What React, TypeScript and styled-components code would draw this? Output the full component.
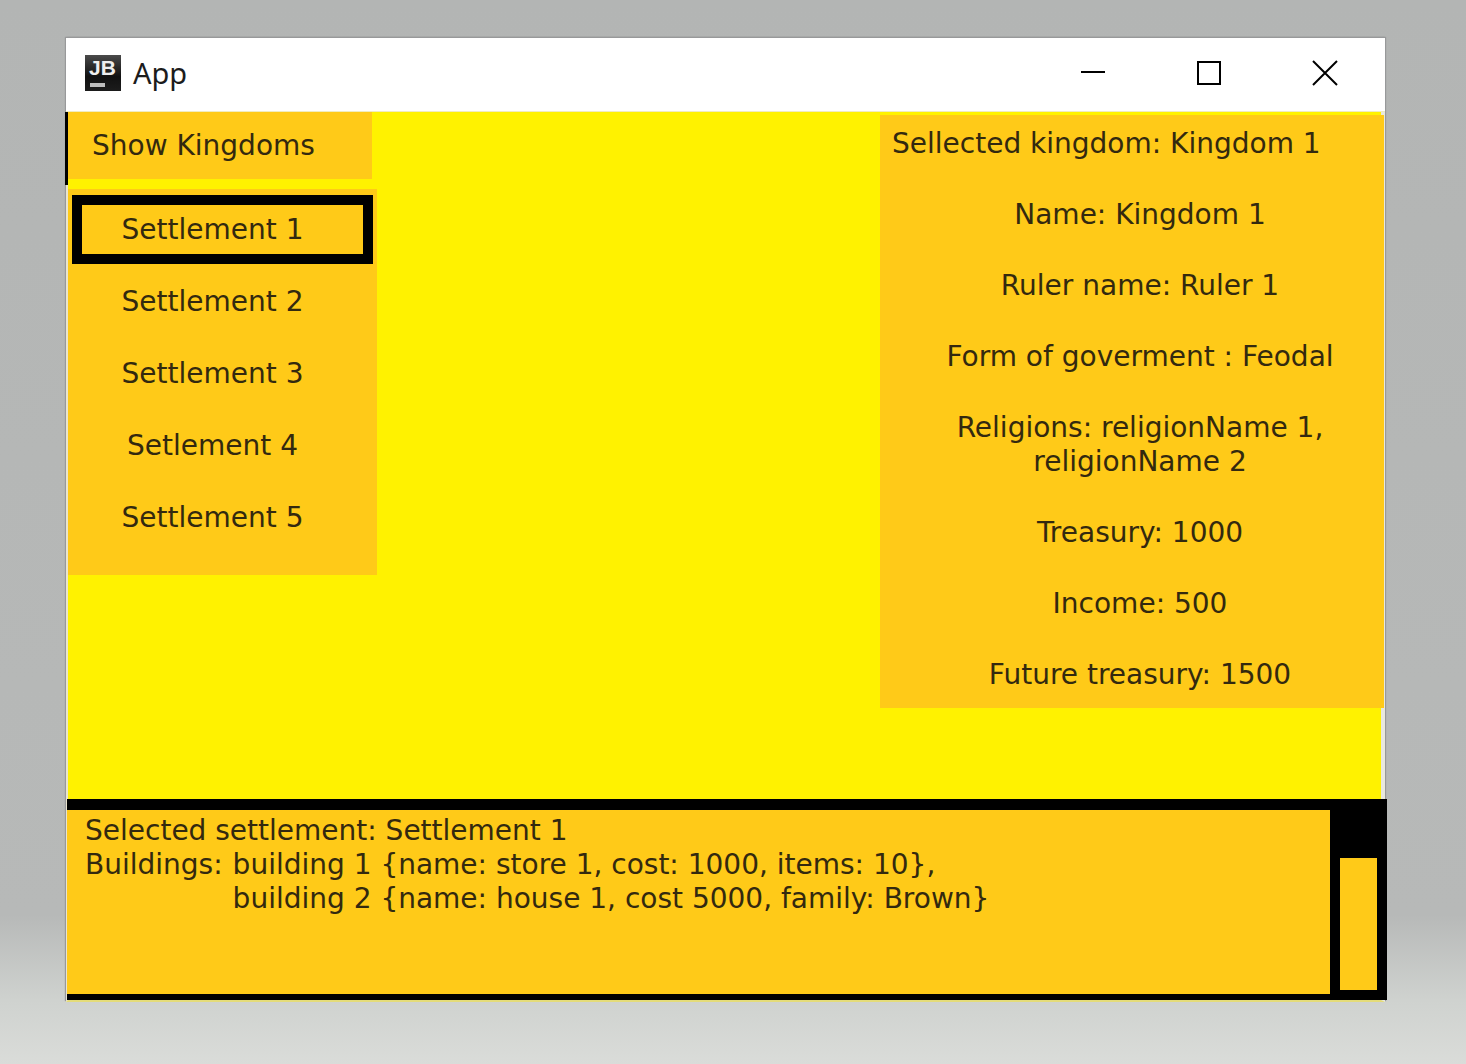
import React, { useState } from "react";
import styled, { createGlobalStyle } from "styled-components";

const colors = {
  ink: "#33290f",
  amber: "#ffca18",
  yellow: "#fff200",
  black: "#000000",
};

const GlobalStyle = createGlobalStyle`
  * {
    box-sizing: border-box;
  }
  body {
    margin: 0;
    color: ${colors.ink};
    font-family: Verdana, "DejaVu Sans", sans-serif;
    font-size: 28px;
    line-height: 34px;
  }
`;

const Desktop = styled.div`
  display: flex;
  min-height: 100vh;
  padding: 38px 81px 62px 66px;
  background: linear-gradient(
    to bottom,
    #b3b5b4 0%,
    #b7b9b8 86%,
    #cfd2cf 94%,
    #dadcd9 100%
  );
`;

const Window = styled.section`
  flex: 1;
  min-width: 0;
  display: flex;
  flex-direction: column;
  background: ${colors.yellow};
  border-left: 2px solid #e9e4cf;
  border-right: 4px solid #e9e9dd;
  border-bottom: 2px solid #e4dc7a;
  box-shadow: 0 -1px 1px 0 #98999a, -1px -1px 1px 0 #98999a,
    1px -1px 1px 0 #98999a;
`;

const TitleBar = styled.header`
  display: flex;
  align-items: center;
  height: 74px;
  margin: 0 -4px 0 -2px;
  padding: 0 2px 3px 19px;
  background: #ffffff;
  border-bottom: 1px solid #f0ecc0;
`;

const AppBadge = styled.svg`
  width: 36px;
  height: 36px;
  margin-right: 12px;
`;

const Title = styled.h1`
  flex: 1;
  margin: 0;
  color: #1c1c1c;
  font: 400 29px/34px "Segoe UI", "Noto Sans", sans-serif;
`;

const CaptionButton = styled.button`
  display: grid;
  place-items: center;
  width: 116px;
  height: 70px;
  padding: 0;
  border: 0;
  background: transparent;
  color: #000000;
`;

const CaptionIcon = styled.svg`
  width: 26px;
  height: 26px;
  fill: none;
  stroke: currentColor;
  stroke-width: 2;
`;

const Workspace = styled.main`
  flex: 1;
  display: flex;
  justify-content: space-between;
  align-items: flex-start;
`;

const Sidebar = styled.nav`
  display: flex;
  flex-direction: column;
  gap: 4px;
`;

const ToolSlot = styled.div`
  margin-left: -3px;
  padding-bottom: 6px;
  border-left: 3px solid ${colors.black};
  background: ${colors.yellow};
`;

const ShowButton = styled.button`
  display: block;
  width: 304px;
  height: 67px;
  padding: 0 24px;
  border: 0;
  background: ${colors.amber};
  color: inherit;
  font: inherit;
  text-align: left;
`;

const SettlementList = styled.ul`
  display: flex;
  flex-direction: column;
  gap: 3px;
  width: 309px;
  margin: 0;
  padding: 6px 4px 23px;
  background: ${colors.amber};
  list-style: none;
`;

const SettlementButton = styled.button<{ $selected: boolean }>`
  display: block;
  width: 100%;
  height: 69px;
  padding: 0 20px 0 0;
  border: 10px solid ${(p) => (p.$selected ? colors.black : "transparent")};
  background: transparent;
  color: inherit;
  font: inherit;
  text-align: center;
`;

const KingdomPanel = styled.aside`
  width: 504px;
  margin: 3px -3px 0 0;
  padding: 12px 12px 16px;
  background: ${colors.amber};
`;

const KingdomHeading = styled.h2`
  margin: 0 0 37px;
  font: inherit;
`;

const FactList = styled.ul`
  display: flex;
  flex-direction: column;
  gap: 37px;
  margin: 0;
  padding: 0 12px 0 28px;
  list-style: none;
  text-align: center;
`;

const DetailBar = styled.footer`
  display: flex;
  height: 201px;
  margin: 0 -6px 0 -1px;
`;

const DetailText = styled.div`
  flex: 1;
  padding: 4px 18px;
  border-top: 11px solid ${colors.black};
  border-bottom: 6px solid ${colors.black};
  background: ${colors.amber};
`;

const DetailLine = styled.p`
  margin: 0;
`;

const Buildings = styled.dl`
  display: flex;
  gap: 10px;
  margin: 0;
`;

const BuildingEntries = styled.dd`
  margin: 0;
`;

const ScrollTrack = styled.div`
  display: flex;
  width: 57px;
  padding: 59px 10px 10px;
  background: ${colors.black};
`;

const ScrollThumb = styled.div`
  flex: 1;
  background: ${colors.amber};
`;

const settlements = [
  "Settlement 1",
  "Settlement 2",
  "Settlement 3",
  "Setlement 4",
  "Settlement 5",
];

const facts = [
  "Name: Kingdom 1",
  "Ruler name: Ruler 1",
  "Form of goverment : Feodal",
  "Religions: religionName 1, religionName 2",
  "Treasury: 1000",
  "Income: 500",
  "Future treasury: 1500",
];

const buildings = [
  "building 1 {name: store 1, cost: 1000, items: 10},",
  "building 2 {name: house 1, cost 5000, family: Brown}",
];

export default function App() {
  const [selected, setSelected] = useState(0);

  return (
    <>
      <GlobalStyle />
      <Desktop>
        <Window>
          <TitleBar>
            <AppBadge viewBox="0 0 36 36" aria-hidden="true">
              <defs>
                <linearGradient id="badge" x1="0" y1="0" x2="0" y2="1">
                  <stop offset="0" stopColor="#4a4a4a" />
                  <stop offset="0.6" stopColor="#111111" />
                  <stop offset="1" stopColor="#1c1c1c" />
                </linearGradient>
              </defs>
              <rect width="36" height="36" fill="url(#badge)" />
              <text
                x="4"
                y="20"
                fill="#eeeeee"
                fontFamily="Liberation Sans, sans-serif"
                fontSize="21"
                fontWeight="700"
              >
                JB
              </text>
              <rect x="5" y="28" width="15" height="4" fill="#bdbdbd" />
            </AppBadge>
            <Title>App</Title>
            <CaptionButton type="button" aria-label="Minimize">
              <CaptionIcon viewBox="0 0 26 26">
                <path d="M1 12h24" />
              </CaptionIcon>
            </CaptionButton>
            <CaptionButton type="button" aria-label="Maximize">
              <CaptionIcon viewBox="0 0 26 26">
                <path d="M2 2h22v22H2z" />
              </CaptionIcon>
            </CaptionButton>
            <CaptionButton type="button" aria-label="Close">
              <CaptionIcon viewBox="0 0 26 26">
                <path d="M1 1l24 24M25 1L1 25" />
              </CaptionIcon>
            </CaptionButton>
          </TitleBar>

          <Workspace>
            <Sidebar>
              <ToolSlot>
                <ShowButton type="button">Show Kingdoms</ShowButton>
              </ToolSlot>
              <SettlementList>
                {settlements.map((name, index) => (
                  <li key={name}>
                    <SettlementButton
                      type="button"
                      $selected={index === selected}
                      aria-pressed={index === selected}
                      onClick={() => setSelected(index)}
                    >
                      {name}
                    </SettlementButton>
                  </li>
                ))}
              </SettlementList>
            </Sidebar>

            <KingdomPanel>
              <KingdomHeading>Sellected kingdom: Kingdom 1</KingdomHeading>
              <FactList>
                {facts.map((fact) => (
                  <li key={fact}>{fact}</li>
                ))}
              </FactList>
            </KingdomPanel>
          </Workspace>

          <DetailBar>
            <DetailText>
              <DetailLine>Selected settlement: Settlement 1</DetailLine>
              <Buildings>
                <dt>Buildings:</dt>
                <BuildingEntries>
                  {buildings.map((building) => (
                    <DetailLine key={building}>{building}</DetailLine>
                  ))}
                </BuildingEntries>
              </Buildings>
            </DetailText>
            <ScrollTrack>
              <ScrollThumb />
            </ScrollTrack>
          </DetailBar>
        </Window>
      </Desktop>
    </>
  );
}
